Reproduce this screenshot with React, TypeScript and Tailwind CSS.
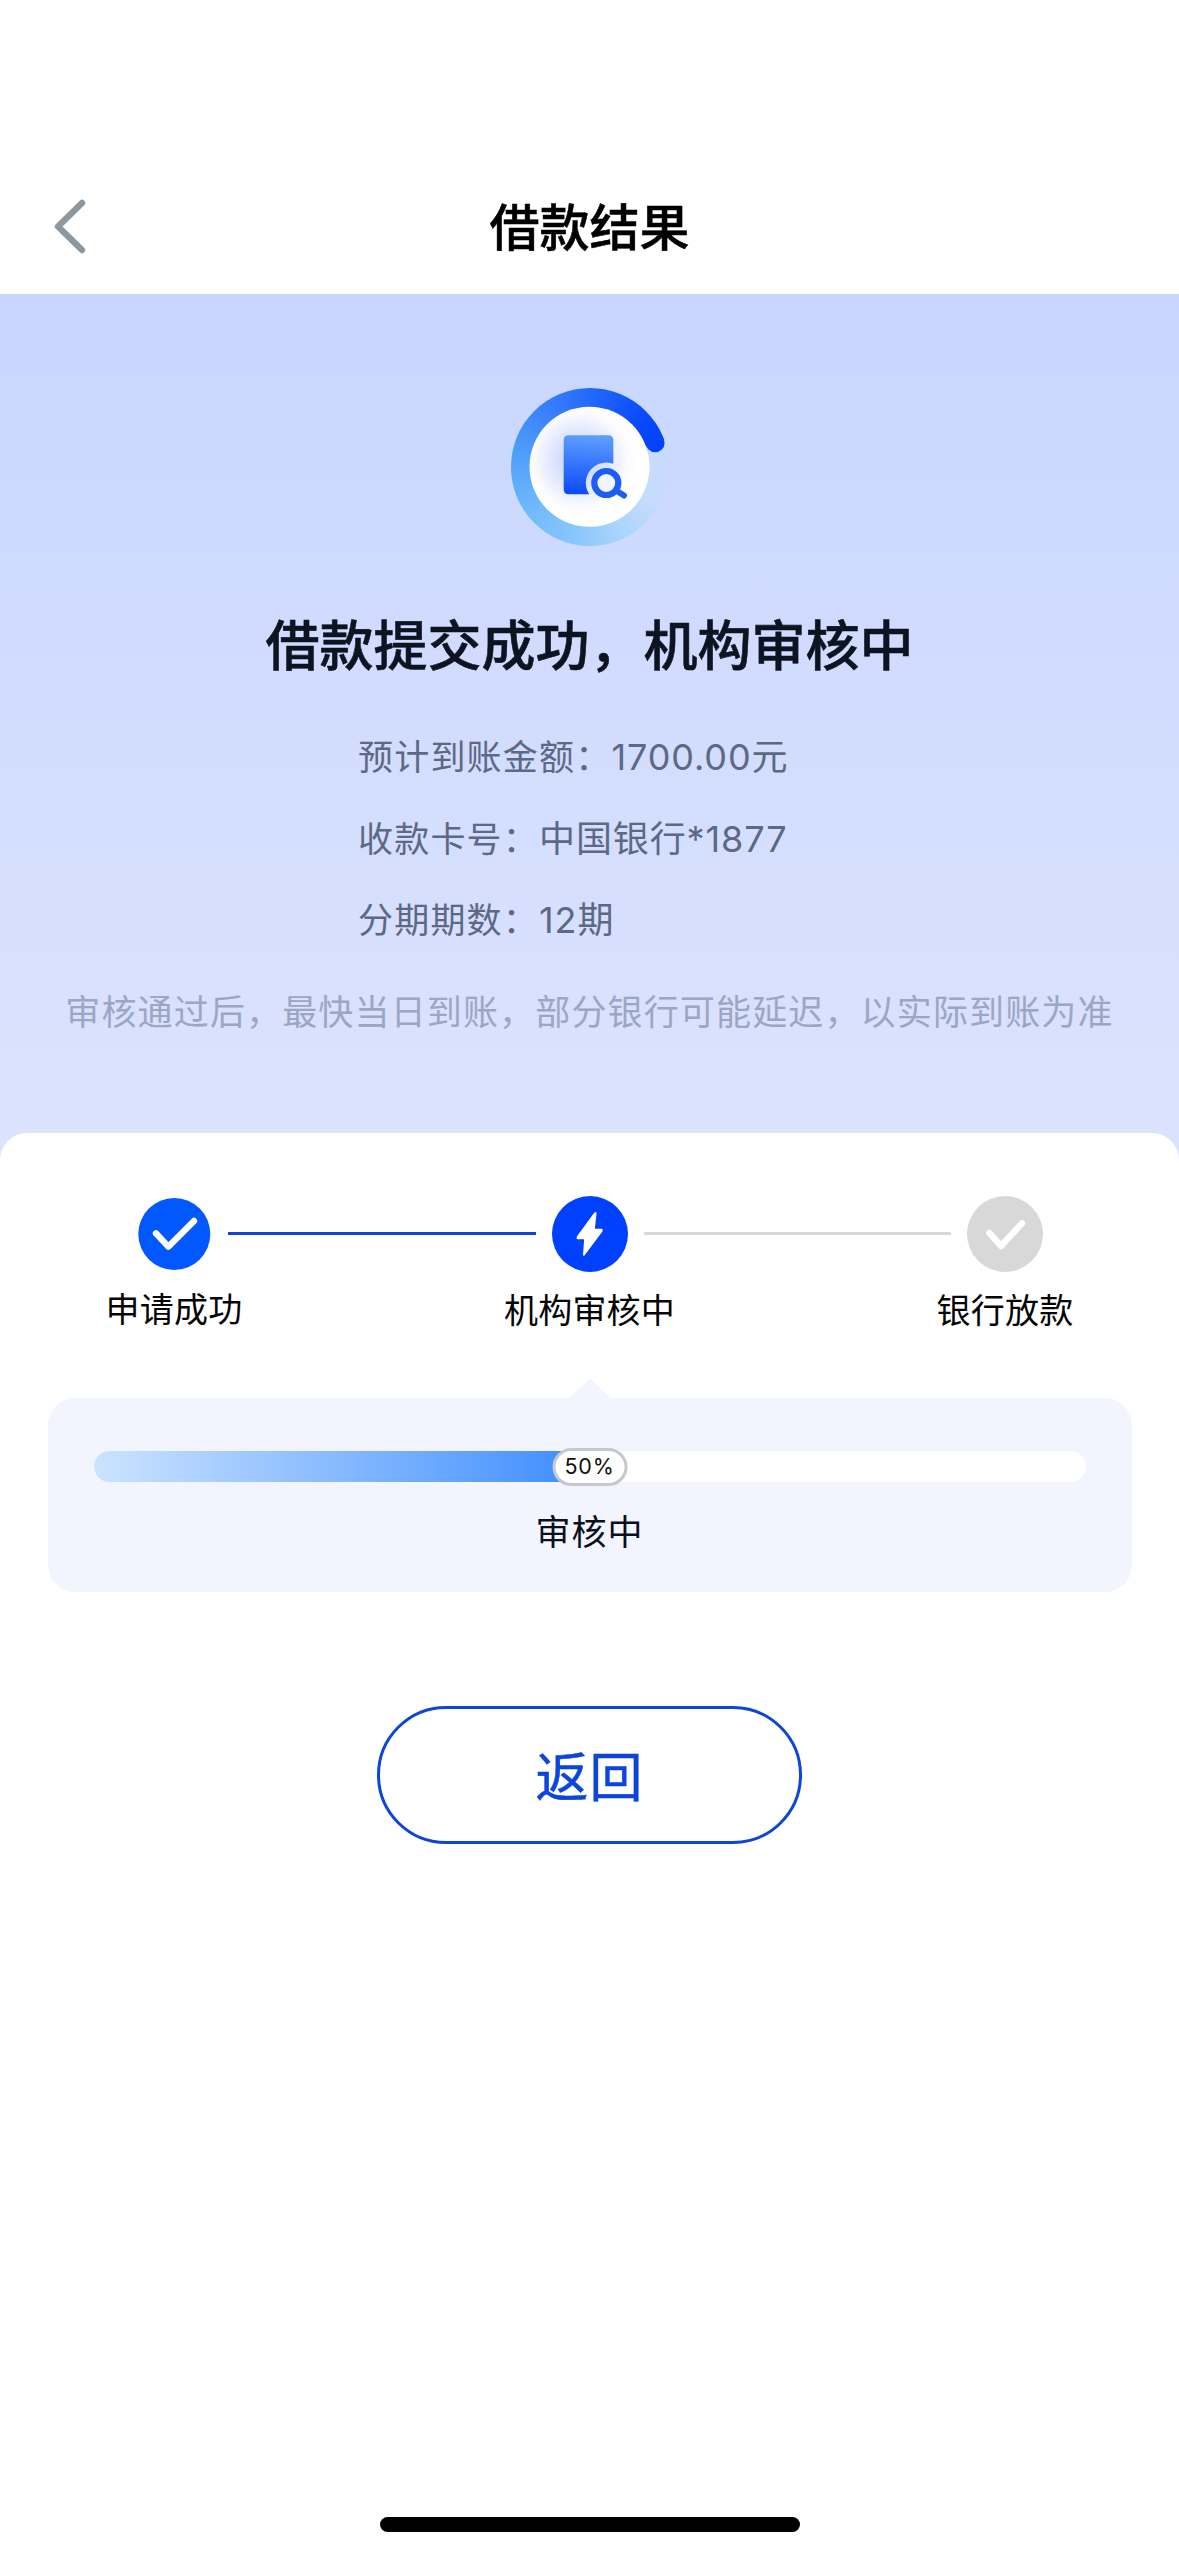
import clsx from "clsx";

type StepState = "done" | "active" | "pending";

const details = [
  { label: "预计到账金额", value: "1700.00元" },
  { label: "收款卡号", value: "中国银行*1877" },
  { label: "分期期数", value: "12期" },
];

const progress = 50;

function ReviewIcon() {
  return (
    <svg width="220" height="220" viewBox="0 0 220 220" fill="none">
      <defs>
        <linearGradient id="doc" x1="108" y1="75" x2="104" y2="135" gradientUnits="userSpaceOnUse">
          <stop stopColor="#5f9fff" />
          <stop offset="1" stopColor="#0a4af8" />
        </linearGradient>
        <radialGradient id="disc" cx="100" cy="100" r="60" gradientUnits="userSpaceOnUse">
          <stop stopColor="#c3d0fb" />
          <stop offset="0.35" stopColor="#d6dffd" />
          <stop offset="0.8" stopColor="#fcfcff" />
          <stop offset="1" stopColor="#ffffff" />
        </radialGradient>
        {/* gap between the sheet and the magnifier */}
        <mask id="lens">
          <rect width="220" height="220" fill="#fff" />
          <circle cx="126.3" cy="123" r="20.5" fill="#000" />
        </mask>
      </defs>
      <foreignObject x="30.5" y="27.8" width="158" height="158">
        <div className="h-[158px] w-[158px] rounded-full bg-[conic-gradient(from_70deg,#c9dafe_0deg,#c5dcfd_50deg,#a9d5fc_85deg,#8bc7fc_120deg,#6fb9fc_165deg,#4f9ffb_210deg,#3b81fa_250deg,#1f66fb_295deg,#0848fb_340deg,#0444fa_360deg)]" />
      </foreignObject>
      <circle cx="175.2" cy="82.9" r="9.4" fill="#0444fa" />
      <circle cx="109.5" cy="106.8" r="60" fill="url(#disc)" />
      <rect x="83.7" y="75.3" width="49.6" height="59" rx="4.5" fill="url(#doc)" mask="url(#lens)" />
      <circle cx="126.3" cy="123" r="12" fill="#f0f4ff" stroke="#1e5df5" strokeWidth="6.2" />
      <path d="m136 130.500 8 5" stroke="#1e5df5" strokeWidth="6" strokeLinecap="round" />
    </svg>
  );
}

function StepIcon({ state }: { state: StepState }) {
  return (
    <svg width="76" height="76" viewBox="0 0 76 76" fill="none" className="shrink-0">
      {state === "done" && (
        <>
          <circle cx="38.3" cy="38" r="36" fill="#0058fe" />
          <path d="M20 37.3 32.3 50.7 58 25" stroke="#fff" strokeWidth="6.4" strokeLinecap="round" strokeLinejoin="round" />
        </>
      )}
      {state === "active" && (
        <>
          <circle cx="38" cy="38" r="38" fill="#0041ff" />
          <path
            d="M43 17 25.5 41v1.5H33L31.8 59 49.8 35v-1.5H42L43.8 17z"
            fill="#fff"
            stroke="#fff"
            strokeWidth="1.6"
            strokeLinejoin="round"
          />
        </>
      )}
      {state === "pending" && (
        <>
          <circle cx="38" cy="38" r="38" fill="#d8d8d8" />
          <path d="M22.3 36.8 34 50 55 27.3" stroke="#fff" strokeWidth="6.4" strokeLinecap="round" strokeLinejoin="round" />
        </>
      )}
    </svg>
  );
}

function Step({ state, label }: { state: StepState; label: string }) {
  return (
    <div className="flex w-[76px] shrink-0 flex-col items-center">
      <StepIcon state={state} />
      <div
        className={clsx(
          "text-[34px] leading-[50px] tracking-[0.2px] whitespace-nowrap text-[#050505]",
          state === "done" ? "mt-[13px]" : "mt-[14px]"
        )}
      >
        {label}
      </div>
    </div>
  );
}

function StepLine({ done }: { done?: boolean }) {
  return <div className={clsx("mx-4 mt-9 h-[3px] flex-1", done ? "bg-[#0d45d8]" : "bg-[#d8d8d8]")} />;
}

export default function App() {
  return (
    <main className="flex h-[2556px] w-[1179px] flex-col bg-white font-['Inter','Noto_Sans_CJK_SC',sans-serif]">
      <header className="grid h-[294px] shrink-0 grid-cols-[1fr_auto_1fr] items-center px-[52px] pt-[160px]">
        <button aria-label="返回" className="justify-self-start">
          <svg width="36" height="56" viewBox="0 0 36 56" fill="none">
            <path d="M30 4 6 27.5 30 51" stroke="#8d979f" strokeWidth="6.4" strokeLinecap="round" strokeLinejoin="round" />
          </svg>
        </button>
        <h1 className="pt-[1px] text-[50px] leading-[70px] font-medium text-black [-webkit-text-stroke:0.5px_#000]">
          借款结果
        </h1>
      </header>

      <section className="flex h-[866px] shrink-0 flex-col items-center bg-linear-to-b from-[#c8d6ff] to-[#dce3fd] pt-[66px]">
        <ReviewIcon />
        <h2 className="mt-[28px] text-[54px] leading-[78px] font-medium text-[#0b1420] [-webkit-text-stroke:0.6px_#0b1420]">
          借款提交成功，机构审核中
        </h2>
        <dl className="mt-[31px] w-[463px] text-[35px] leading-[81.5px] text-[#5d6984]">
          {details.map((d) => (
            <div key={d.label} className="flex whitespace-nowrap">
              <dt className="tracking-[1.2px]">{d.label}：</dt>
              <dd className="text-[36px] tracking-[0.9px]">{d.value}</dd>
            </div>
          ))}
        </dl>
        <p className="mt-[23px] text-[35px] leading-[54px] tracking-[1.15px] whitespace-nowrap text-[#9ba7c2]">
          审核通过后，最快当日到账，部分银行可能延迟，以实际到账为准
        </p>
      </section>

      <section className="-mt-[27px] flex flex-1 flex-col items-center rounded-t-[27px] bg-white pt-[63px]">
        <div className="flex w-[907px] items-start">
          <Step state="done" label="申请成功" />
          <StepLine done />
          <Step state="active" label="机构审核中" />
          <StepLine />
          <Step state="pending" label="银行放款" />
        </div>

        <div className="relative mt-[62px] flex h-[194px] w-[1084px] flex-col items-center rounded-[27px] bg-[#f2f4fe] px-[46px] pt-[53px]">
          <div className="absolute -top-[19px] left-1/2 -translate-x-1/2 border-x-[22px] border-b-[20px] border-x-transparent border-b-[#f2f4fe]" />
          <div className="relative h-[31px] w-full rounded-full bg-white">
            <div
              className="h-full rounded-l-full bg-linear-to-r from-[#cce3fe] to-[#3a8bff]"
              style={{ width: `${progress}%` }}
            />
            <div
              className="absolute -top-[3px] flex h-[38px] w-[75px] -translate-x-1/2 items-center justify-center rounded-full border-[3px] border-[#c7c8cd] bg-white text-[21.5px] leading-none tracking-[0.8px] text-[#111]"
              style={{ left: `${progress}%` }}
            >
              {progress}%
            </div>
          </div>
          <div className="mt-[23px] text-[35px] leading-[54px] tracking-[1px] text-[#0b1020]">审核中</div>
        </div>

        <button className="mt-[114px] h-[138px] w-[425px] rounded-full border-[3px] border-[#0d45d8] pt-[6px] text-[53px] leading-none tracking-[1px] text-[#0b45dc] [-webkit-text-stroke:0.5px_#0b45dc]">
          返回
        </button>
        <div className="mt-auto mb-[24px] h-[15px] w-[420px] rounded-full bg-black" />
      </section>
    </main>
  );
}
